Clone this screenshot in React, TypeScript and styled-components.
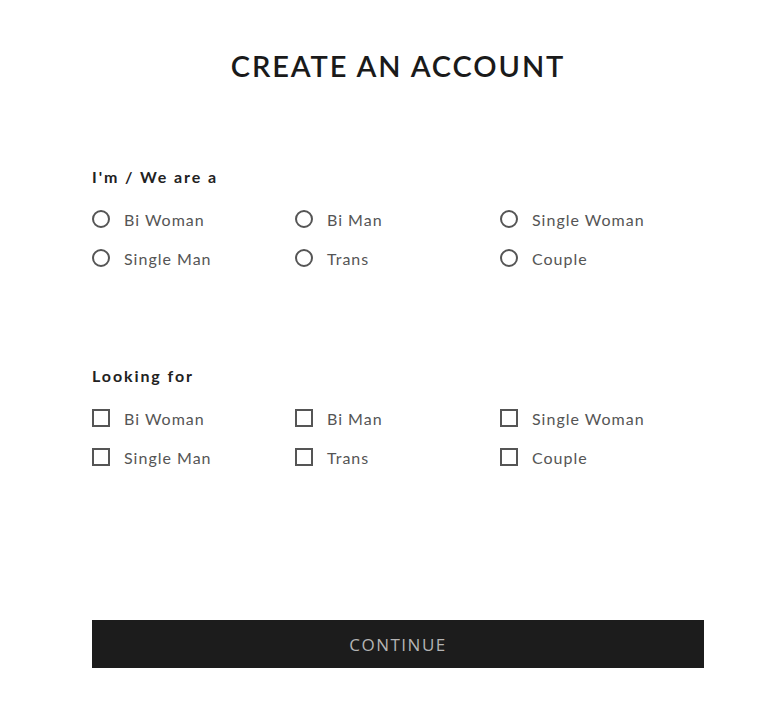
import * as React from 'react';
import styled, { createGlobalStyle } from 'styled-components';

const GlobalStyle = createGlobalStyle`
  html, body {
    margin: 0;
    padding: 0;
    background: #ffffff;
  }
  body {
    font-family: Lato, 'Liberation Sans', sans-serif;
    color: #222;
  }
`;

const OPTIONS = ['Bi Woman', 'Bi Man', 'Single Woman', 'Single Man', 'Trans', 'Couple'];

const Page = styled.div`
  width: 768px;
  height: 705px;
  box-sizing: border-box;
  padding: 49px 64px 0 92px;
`;

const Title = styled.h1`
  margin: 0;
  width: 612px;
  text-align: center;
  font-family: Lato, sans-serif;
  font-weight: 600;
  font-size: 29px;
  letter-spacing: 1.9px;
  line-height: 34px;
  color: #1a1a1a;
`;

const Form = styled.form`
  width: 612px;
  display: flex;
  flex-direction: column;
`;

const Section = styled.fieldset<{ $top: number }>`
  border: 0;
  margin: ${p => p.$top}px 0 0;
  padding: 0;
  min-width: 0;
`;

const Legend = styled.legend`
  padding: 0;
  font-family: Lato, sans-serif;
  font-weight: 700;
  font-size: 16px;
  letter-spacing: 1.9px;
  line-height: 20px;
  color: #222;
`;

const Grid = styled.div`
  display: grid;
  grid-template-columns: 203px 205px 204px;
  row-gap: 19px;
  margin-top: 22px;
`;

const Option = styled.label`
  display: flex;
  align-items: center;
  gap: 14px;
  height: 20px;
  cursor: pointer;
  font-family: Lato, sans-serif;
  font-weight: 400;
  font-size: 16px;
  letter-spacing: 1px;
  color: #555;
`;

const Mark = styled.input<{ $round?: boolean }>`
  appearance: none;
  margin: 0;
  width: 18px;
  height: 18px;
  box-sizing: border-box;
  border: 2px solid #555;
  border-radius: ${p => (p.$round ? '50%' : '0')};
  background: #fff;
  flex-shrink: 0;
  &:checked {
    background: ${p => (p.$round ? 'radial-gradient(#333 0 4px, #fff 5px)' : '#333')};
  }
`;

const Button = styled.button`
  margin-top: 153px;
  height: 48px;
  width: 612px;
  border: 0;
  background: #1c1c1c;
  color: #b4b4b4;
  font-family: 'Open Sans', sans-serif;
  font-size: 17px;
  letter-spacing: 1.5px;
  cursor: pointer;
`;

const Choices: React.FC<{ name: string; round?: boolean }> = ({ name, round }) => (
  <Grid>
    {OPTIONS.map(o => (
      <Option key={o}>
        <Mark type={round ? 'radio' : 'checkbox'} name={name} $round={round} />
        {o}
      </Option>
    ))}
  </Grid>
);

export default function App() {
  return (
    <Page>
      <GlobalStyle />
      <Title>CREATE AN ACCOUNT</Title>
      <Form onSubmit={e => e.preventDefault()}>
        <Section $top={84}>
          <Legend>I'm / We are a</Legend>
          <Choices name="iam" round />
        </Section>
        <Section $top={98}>
          <Legend>Looking for</Legend>
          <Choices name="looking" />
        </Section>
        <Button type="submit">CONTINUE</Button>
      </Form>
    </Page>
  );
}
